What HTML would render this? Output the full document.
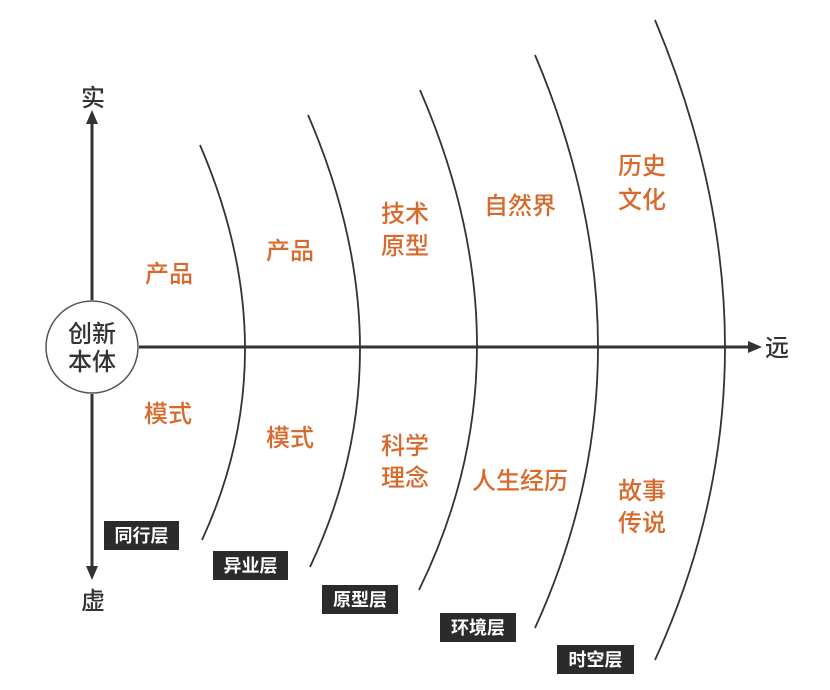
<!DOCTYPE html>
<html><head><meta charset="utf-8"><style>
html,body{margin:0;padding:0;background:#fff;width:830px;height:690px;overflow:hidden}
svg text{font-family:"Liberation Sans","Noto Sans CJK SC",sans-serif}
.o{fill:#d9692a;font-size:24px;font-weight:500}
.b{fill:#333;font-size:24px;font-weight:500}
.w{fill:#fff;font-size:18px;font-weight:700}
</style></head><body>
<svg width="830" height="690" viewBox="0 0 830 690" xmlns="http://www.w3.org/2000/svg">
<g stroke="#333" stroke-width="3" fill="none">
<line x1="92" y1="122" x2="92" y2="300"/>
<line x1="92" y1="394" x2="92" y2="568"/>
<line x1="139" y1="347" x2="750" y2="347"/>
</g>
<polygon points="92,110 86,124 98,124" fill="#333"/>
<polygon points="92,580 86,566 98,566" fill="#333"/>
<polygon points="762,347 748,341 748,353" fill="#333"/>
<circle cx="92" cy="347" r="46" fill="#fff" stroke="#555" stroke-width="1.5"/>
<g stroke="#333" stroke-width="1.8" fill="none">
<path d="M200,145 Q289,351.5 202,540"/>
<path d="M308,115 Q411,353 310,567"/>
<path d="M420,90 Q534.5,354 419,590"/>
<path d="M535,55 Q661,352.5 535,628"/>
<path d="M655,20 Q795,354 655,660"/>
</g>
<g text-anchor="middle">
<text class="b" x="93" y="106">实</text>
<text class="b" x="93" y="609">虚</text>
<text class="b" x="777" y="356">远</text>
<text class="b" x="92" y="342">创新</text>
<text class="b" x="92" y="370">本体</text>
<text class="o" x="169" y="282">产品</text>
<text class="o" x="168" y="422">模式</text>
<text class="o" x="290" y="259">产品</text>
<text class="o" x="290" y="446">模式</text>
<text class="o" x="405" y="222">技术</text>
<text class="o" x="405" y="254">原型</text>
<text class="o" x="405" y="454">科学</text>
<text class="o" x="405" y="486">理念</text>
<text class="o" x="520" y="214">自然界</text>
<text class="o" x="520" y="489">人生经历</text>
<text class="o" x="642" y="174">历史</text>
<text class="o" x="642" y="208">文化</text>
<text class="o" x="642" y="499">故事</text>
<text class="o" x="642" y="531">传说</text>
</g>
<g fill="#2b2b2b">
<rect x="104" y="521" width="75" height="29"/>
<rect x="213" y="551" width="75" height="29"/>
<rect x="322" y="585" width="76" height="29"/>
<rect x="440" y="613" width="76" height="29"/>
<rect x="557" y="645" width="77" height="29"/>
</g>
<g text-anchor="middle">
<text class="w" x="141.5" y="542">同行层</text>
<text class="w" x="250.5" y="572">异业层</text>
<text class="w" x="360" y="606">原型层</text>
<text class="w" x="478" y="634">环境层</text>
<text class="w" x="595.5" y="666">时空层</text>
</g>
</svg>
</body></html>
